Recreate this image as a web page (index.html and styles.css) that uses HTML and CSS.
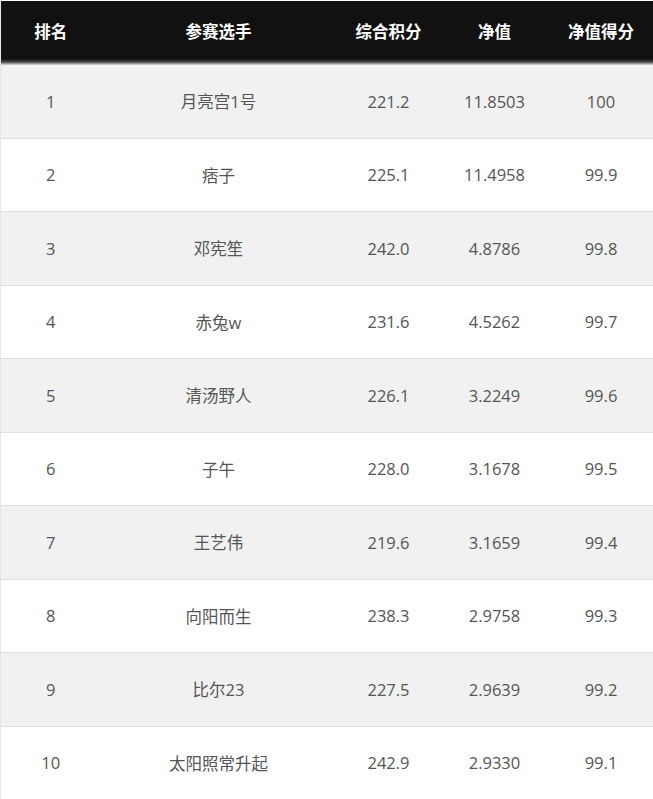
FILE: index.html
```html
<!DOCTYPE html>
<html lang="zh">
<head>
<meta charset="utf-8">
<link rel="stylesheet" href="styles.css">
</head>
<body>
<table class="rank">
  <colgroup>
    <col class="c1"><col class="c2"><col class="c3"><col class="c4"><col class="c5">
  </colgroup>
  <thead>
    <tr><th>排名</th><th>参赛选手</th><th>综合积分</th><th>净值</th><th>净值得分</th></tr>
  </thead>
  <tbody>
    <tr><td>1</td><td>月亮宫1号</td><td>221.2</td><td>11.8503</td><td>100</td></tr>
    <tr><td>2</td><td>痞子</td><td>225.1</td><td>11.4958</td><td>99.9</td></tr>
    <tr><td>3</td><td>邓宪笙</td><td>242.0</td><td>4.8786</td><td>99.8</td></tr>
    <tr><td>4</td><td>赤兔w</td><td>231.6</td><td>4.5262</td><td>99.7</td></tr>
    <tr><td>5</td><td>清汤野人</td><td>226.1</td><td>3.2249</td><td>99.6</td></tr>
    <tr><td>6</td><td>子午</td><td>228.0</td><td>3.1678</td><td>99.5</td></tr>
    <tr><td>7</td><td>王艺伟</td><td>219.6</td><td>3.1659</td><td>99.4</td></tr>
    <tr><td>8</td><td>向阳而生</td><td>238.3</td><td>2.9758</td><td>99.3</td></tr>
    <tr><td>9</td><td>比尔23</td><td>227.5</td><td>2.9639</td><td>99.2</td></tr>
    <tr><td>10</td><td>太阳照常升起</td><td>242.9</td><td>2.9330</td><td>99.1</td></tr>
  </tbody>
</table>
</body>
</html>
```
FILE: styles.css
```css
html, body {
  margin: 0;
  padding: 0;
  background: #fff;
}
body {
  padding-top: 1px;
  font-family: "Open Sans", "Noto Sans CJK SC", sans-serif;
}
.rank {
  width: 653px;
  border-collapse: collapse;
  table-layout: fixed;
  border-left: 1px solid #e6e6e6;
}
.c1 { width: 100px; }
.c2 { width: 236px; }
.c3 { width: 104px; }
.c4 { width: 108px; }
.c5 { width: 105px; }
.rank thead tr {
  background: linear-gradient(to bottom, #111 0, #111 58px, #4a4a4a 61px, #dcdcdc 64px);
}
.rank th {
  height: 60px;
  padding: 0 0 4px;
  color: #fff;
  font-size: 16.5px;
  font-weight: 700;
  text-align: center;
  font-family: "Noto Sans CJK SC", sans-serif;
}
.rank td {
  height: 72.5px;
  padding: 0;
  text-align: center;
  color: #555;
  font-size: 16.5px;
  border-bottom: 1px solid #dedede;
}
.rank tbody tr:nth-child(odd) {
  background: #f1f1f1;
}
.rank tbody tr:last-child td {
  border-bottom: none;
}
```
